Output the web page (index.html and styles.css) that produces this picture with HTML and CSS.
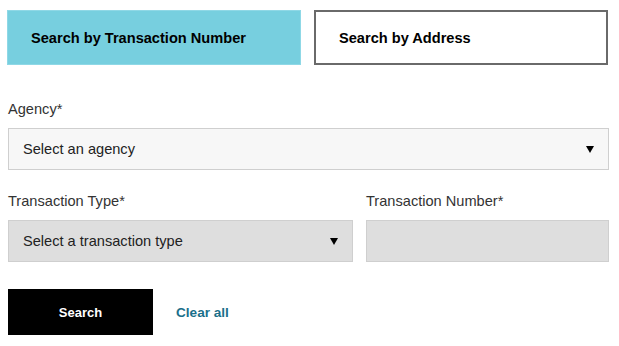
FILE: index.html
```html
<!DOCTYPE html>
<html lang="en">
<head>
    <meta charset="UTF-8">
    <meta name="viewport" content="width=device-width, initial-scale=1.0">
    <title>Transaction Search</title>
    <link rel="stylesheet" href="styles.css">
</head>
<body>
    <div class="search-panel">
        <div class="tabs">
            <button class="tab active">Search by Transaction Number</button>
            <button class="tab">Search by Address</button>
        </div>

        <div class="form-group agency">
            <label class="field-label">Agency*</label>
            <div class="select light">
                <span>Select an agency</span>
                <span class="arrow"></span>
            </div>
        </div>

        <div class="form-row">
            <div class="form-group type-col">
                <label class="field-label">Transaction Type*</label>
                <div class="select grey">
                    <span>Select a transaction type</span>
                    <span class="arrow"></span>
                </div>
            </div>
            <div class="form-group number-col">
                <label class="field-label">Transaction Number*</label>
                <div class="text-input"></div>
            </div>
        </div>

        <div class="actions">
            <button class="search-btn">Search</button>
            <a class="clear-link" href="#">Clear all</a>
        </div>
    </div>
</body>
</html>
```

FILE: styles.css
```css
body {
    margin: 0;
    font-family: 'Liberation Sans', Arial, sans-serif;
    color: #333;
    background: #fff;
}
.search-panel {
    width: 601px;
    padding: 10px 0 0 8px;
}
.tabs {
    display: flex;
    gap: 13px;
    margin-left: -1px;
    margin-bottom: 36px;
}
.tab {
    box-sizing: border-box;
    width: 294px;
    height: 55px;
    padding: 0 0 0 23px;
    text-align: left;
    font-family: inherit;
    font-size: 14.6px;
    font-weight: bold;
    color: #000;
    background: #fff;
    border: 2px solid #6a6a6a;
    cursor: pointer;
}
.tab.active {
    background: #77cfdf;
    border: 1px solid #8fd8e6;
}
.form-group {
    margin-bottom: 22px;
}
.form-group.agency {
    margin-bottom: 23px;
}
.field-label {
    display: block;
    font-size: 14.6px;
    line-height: 16px;
    color: #333;
    margin-bottom: 11px;
}
.select, .text-input {
    box-sizing: border-box;
    height: 42px;
    border: 1px solid #cfcfcf;
    display: flex;
    align-items: center;
    justify-content: space-between;
    padding: 0 14px 0 14px;
    font-size: 14.6px;
    color: #222;
}
.select.light {
    background: #f7f7f7;
}
.select.grey, .text-input {
    background: #dedede;
}
.arrow {
    width: 0;
    height: 0;
    border-left: 4.5px solid transparent;
    border-right: 4.5px solid transparent;
    border-top: 7px solid #000;
}
.form-row {
    display: flex;
    gap: 13px;
}
.type-col {
    width: 345px;
}
.number-col {
    width: 243px;
}
.actions {
    display: flex;
    align-items: center;
    gap: 23px;
    margin-top: 5px;
}
.search-btn {
    width: 145px;
    height: 46px;
    background: #000;
    color: #fff;
    border: none;
    font-family: inherit;
    font-size: 13px;
    font-weight: bold;
    cursor: pointer;
}
.clear-link {
    color: #1b6f8a;
    font-size: 13.6px;
    font-weight: bold;
    text-decoration: none;
}
```
